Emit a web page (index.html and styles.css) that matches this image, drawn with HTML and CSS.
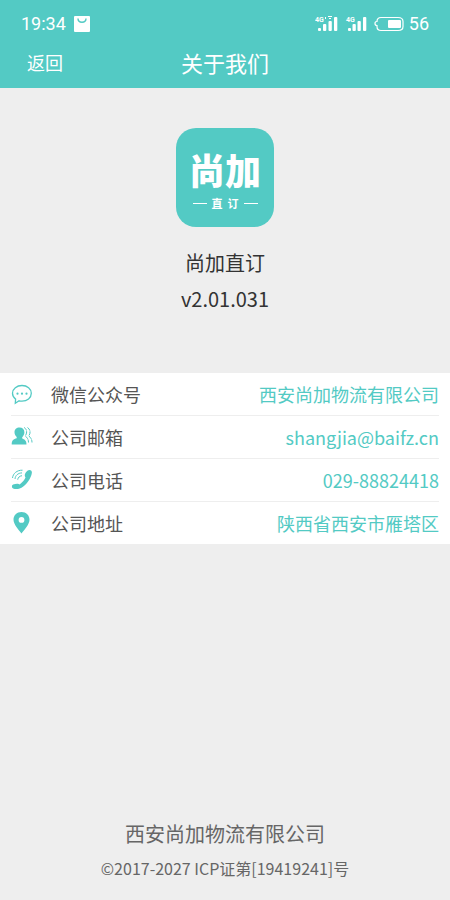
FILE: index.html
```html
<!DOCTYPE html>
<html lang="zh-CN">
<head>
<meta charset="utf-8">
<meta name="viewport" content="width=device-width, initial-scale=1">
<title>关于我们</title>
<link rel="stylesheet" href="styles.css">
</head>
<body>
<header class="header">
  <div class="status">
    <div class="status-group">
      <span class="status-text">19:34</span>
      <svg width="16" height="16" viewBox="0 0 16 16" aria-hidden="true"><rect width="16" height="16" rx="1" fill="#fff"/><path d="M4 2.500c0 5 8 5 8 0" fill="none" stroke="#53cac4" stroke-width="1.400"/></svg>
    </div>
    <div class="status-group">
      <svg width="92" height="18" viewBox="0 0 92 18" aria-hidden="true">
        <g fill="#fff">
          <rect x="3" y="13" width="3" height="3" rx="1"/><rect x="8" y="9" width="3.300" height="7" rx="1"/><rect x="13.500" y="6" width="3.300" height="10" rx="1"/><rect x="19" y="2" width="3.300" height="14" rx="1"/>
          <rect x="33" y="13" width="3" height="3" rx="1"/><rect x="37.500" y="9" width="3.300" height="7" rx="1"/><rect x="42.500" y="6" width="3.300" height="10" rx="1"/><rect x="48" y="2" width="3.300" height="14" rx="1"/>
          <rect x="73" y="5" width="13" height="8" rx="1"/>
          <rect x="10" y="2" width="1" height="2"/><rect x="13" y="1" width="4" height="1"/><rect x="14" y="3" width="2" height="1"/>
          <text class="network" x="0" y="7">4G</text>
          <text class="network" x="31" y="7">4G</text>
        </g>
        <path fill="none" stroke="#fff" stroke-width="1.200" d="M66 2.500h17q5 0 5 4v5q0 4-5 4H66q-4 0-4-4v-1q-2 0-2-2t2-2q0-4 4-4Z"/>
      </svg>
      <span class="status-text">56</span>
    </div>
  </div>
  <nav class="nav">
    <button type="button" class="back">返回</button>
    <h1 class="title">关于我们</h1>
  </nav>
</header>
<main class="main">
  <section class="brand">
    <div class="logo">
      <span class="logo-name">尚加</span>
      <span class="logo-sub"><span>直</span><span>订</span></span>
    </div>
    <p class="app-name">尚加直订</p>
    <p class="version">v2.01.031</p>
  </section>
  <ul class="list">
    <li class="row">
      <svg class="icon" viewBox="0 0 22 22" aria-hidden="true"><path d="M11 2.500c5.200 0 9.300 3.200 9.300 7.800s-4.100 7.900-9.300 7.900c-1 0-2-.1-2.900-.4L4.300 20.200l.3-4.100C2.600 14.700 1.500 12.600 1.500 10.300 1.500 5.700 5.800 2.500 11 2.500Z" fill="none" stroke="#53cac4" stroke-width="1.300"/><g fill="#53cac4"><circle cx="6.500" cy="10.700" r="1.100"/><circle cx="11" cy="10.700" r="1.100"/><circle cx="15.500" cy="10.700" r="1.100"/></g></svg>
      <span class="label">微信公众号</span>
      <span class="value">西安尚加物流有限公司</span>
    </li>
    <li class="row">
      <svg class="icon" viewBox="0 0 22 22" aria-hidden="true"><path d="M8.500 1.500c3 0 4.900 2 4.900 4.800 0 2-1 3.900-2.200 4.900v1.300c2 .8 4.300 1.700 4.300 6H.7c0-4.500 2-5.400 5-6.200v-1.400C4.500 10 3.500 8.300 3.500 6.300c0-2.800 2-4.800 5-4.800Z" fill="#53cac4"/><path d="M13 1.500c3 1.500 3.500 5 1.300 8.500 2 1.500 3.200 3.500 3.200 6.500M16.500 1.500c3 2 3.300 5.500 1.300 8.500 2 1.500 3.200 3.500 3.200 6.500" fill="none" stroke="#53cac4" stroke-dasharray="4 .7"/></svg>
      <span class="label">公司邮箱</span>
      <a class="value" href="mailto:shangjia@baifz.cn">shangjia@baifz.cn</a>
    </li>
    <li class="row">
      <svg class="icon" viewBox="0 0 22 22" aria-hidden="true"><path d="M18.200 1c1.700-.2 2.900 1.200 2.700 2.700-.8 5.600-5.400 12-10.400 15.100-3 1.700-6.300 1.600-8.400.6-1.500-.7-1.700-3.500 0-4 2-.4 4.200-1.300 5.600-.3.600.5.900.3 1.500-.1 2.300-1.700 4.300-4.300 5.300-6.500-.8-1.300-1-2.400-.4-3.700C15 3.200 16 1.300 18.200 1Z" fill="#53cac4"/><path d="M1.500 9C2 4.500 6 1 11.500 1.200M4 10C4.300 6.500 7 4 11 3.900M6.700 10.700C7 8.500 8.500 7 11 6.700" fill="none" stroke="#53cac4"/></svg>
      <span class="label">公司电话</span>
      <a class="value" href="tel:029-88824418">029-88824418</a>
    </li>
    <li class="row">
      <svg class="icon" viewBox="0 0 22 22" aria-hidden="true"><path fill-rule="evenodd" d="M10.500 0c4.700 0 8 3.300 8 7.700 0 4.800-5.200 9.800-8 13.800-2.800-4-8-9-8-13.800C2.500 3.300 5.800 0 10.500 0Zm0 5a2.900 2.900 0 1 0 0 5.800 2.900 2.900 0 0 0 0-5.800Z" fill="#53cac4"/></svg>
      <span class="label">公司地址</span>
      <span class="value">陕西省西安市雁塔区</span>
    </li>
  </ul>
</main>
<footer class="footer">
  <p class="company">西安尚加物流有限公司</p>
  <p class="icp">©2017-2027 ICP证第[19419241]号</p>
</footer>
</body>
</html>
```
FILE: styles.css
```css
* { box-sizing: border-box; }
body {
  margin: 0;
  min-height: 100vh;
  display: flex;
  flex-direction: column;
  background: #eee;
  color: #333;
  font-family: "Noto Sans CJK SC", sans-serif;
}
p, h1, ul { margin: 0; padding: 0; }
.header { background: #53cac4; color: #fff; padding-bottom: 12px; }
.status {
  height: 48px;
  padding: 0 21px;
  display: flex;
  align-items: center;
  justify-content: space-between;
}
.status-group { display: flex; align-items: center; gap: 8px; }
.status-group:last-child { gap: 2px; }
.status-text { font: 400 18px/24px Roboto, sans-serif; }
.network { font: 700 7px Roboto, sans-serif; }
.nav {
  display: grid;
  grid-template-columns: 1fr auto 1fr;
  align-items: center;
  padding: 0 27px;
  height: 28px;
}
.back {
  justify-self: start;
  border: 0;
  padding: 0;
  background: none;
  color: inherit;
  font: inherit;
  font-size: 18px;
  line-height: 28px;
}
.title { font-size: 22px; line-height: 28px; font-weight: 400; }
.brand {
  padding: 40px 0 56px;
  display: flex;
  flex-direction: column;
  align-items: center;
}
.logo {
  width: 98px;
  height: 99px;
  margin-bottom: 18px;
  padding-top: 15px;
  border-radius: 20px;
  background: #53cac4;
  color: #fff;
  display: flex;
  flex-direction: column;
  align-items: center;
}
.logo-name { font-size: 36px; line-height: 52px; font-weight: 900; }
.logo-sub {
  display: flex;
  align-items: center;
  gap: 5px;
  font-size: 11px;
  line-height: 16px;
  font-weight: 700;
}
.logo-sub::before, .logo-sub::after {
  content: "";
  width: 14px;
  height: 1px;
  background: #fff;
}
.app-name, .version { font-size: 20px; line-height: 36px; }
.list { list-style: none; background: #fff; }
.row {
  display: flex;
  align-items: center;
  margin: 0 11px;
  border-bottom: 1px solid #eee;
  font-size: 18px;
  line-height: 42px;
}
.row:last-child { border-bottom: 0; }
.icon { width: 22px; height: 22px; margin-right: 18px; flex: none; }
.label { color: #555; }
.value { margin-left: auto; color: #53cac4; text-decoration: none; }
.footer {
  margin-top: auto;
  padding-bottom: 16px;
  text-align: center;
  color: #666;
}
.company { font-size: 20px; line-height: 36px; }
.icp { font-size: 16px; line-height: 32px; }
```
